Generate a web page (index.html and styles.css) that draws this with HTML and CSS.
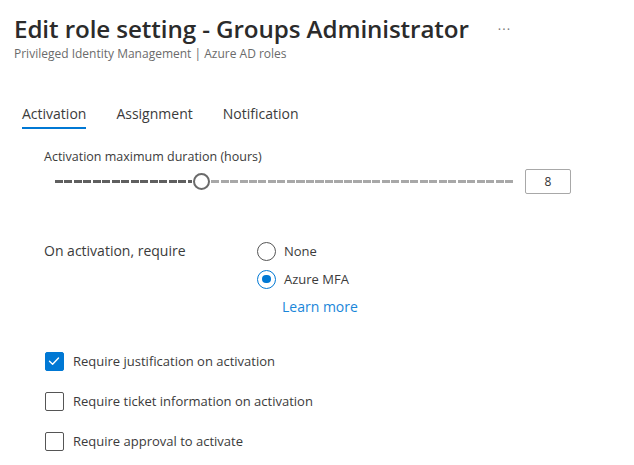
FILE: index.html
```html
<!DOCTYPE html>
<html>
<head>
<meta charset="utf-8">
<link rel="stylesheet" href="styles.css">
</head>
<body>
<div class="page">
  <header class="head">
    <div class="title-row">
      <h1 class="title">Edit role setting - Groups Administrator</h1>
      <span class="more">···</span>
    </div>
    <div class="subtitle">Privileged Identity Management | Azure AD roles</div>
  </header>

  <nav class="tabs">
    <span class="tab active">Activation</span>
    <span class="tab">Assignment</span>
    <span class="tab">Notification</span>
  </nav>

  <section class="duration">
    <div class="label">Activation maximum duration (hours)</div>
    <div class="slider-row">
      <div class="slider">
        <span class="track filled"></span>
        <span class="thumb"></span>
        <span class="track rest"></span>
      </div>
      <div class="num">8</div>
    </div>
  </section>

  <section class="require">
    <div class="req-label">On activation, require</div>
    <div class="options">
      <div class="radio"><span class="circle"></span><span>None</span></div>
      <div class="radio"><span class="circle on"></span><span>Azure MFA</span></div>
      <a class="link">Learn more</a>
    </div>
  </section>

  <section class="checks">
    <div class="check"><span class="box on"><svg viewBox="0 0 18 18" width="18" height="18"><path d="M4.5 9.3 L7.6 12.2 L13.5 6" fill="none" stroke="#fff" stroke-width="1.4" stroke-linecap="round" stroke-linejoin="round"/></svg></span><span>Require justification on activation</span></div>
    <div class="check"><span class="box"></span><span>Require ticket information on activation</span></div>
    <div class="check"><span class="box"></span><span>Require approval to activate</span></div>
  </section>
</div>
</body>
</html>
```

FILE: styles.css
```css
html, body {
  margin: 0;
  padding: 0;
  background: #fff;
}
body {
  font-family: "Open Sans", "Noto Sans", sans-serif;
  color: #323130;
}
.page {
  padding: 14px 0 0 14px;
  width: 620px;
}
.title-row {
  display: flex;
  align-items: center;
  gap: 29px;
}
.title {
  margin: 0;
  font-size: 24.2px;
  font-weight: 600;
  line-height: 30px;
  letter-spacing: -0.1px;
  color: #2b2b2b;
}
.more {
  font-size: 13px;
  color: #777;
  letter-spacing: 1px;
}
.subtitle {
  font-size: 12px;
  color: #6b6b6b;
  line-height: 16px;
  margin-top: 2px;
}
.tabs {
  display: flex;
  gap: 30px;
  margin: 42px 0 0 8px;
}
.tab {
  font-size: 14px;
  line-height: 20px;
  color: #3b3b3b;
  padding-bottom: 3px;
}
.tab.active {
  border-bottom: 2px solid #0078d4;
}
.duration {
  margin: 19px 0 0 30px;
}
.label {
  font-size: 12.5px;
  color: #3b3b3b;
  line-height: 18px;
}
.slider-row {
  display: flex;
  align-items: center;
  margin-top: 3px;
}
.slider {
  display: flex;
  align-items: center;
  margin-left: 11px;
}
.track {
  display: block;
}
.track.filled {
  width: 137px;
  height: 3px;
  background: repeating-linear-gradient(90deg, #5f5f5f 0 8px, transparent 8px 9.5px);
}
.track.rest {
  width: 303px;
  height: 3px;
  background: repeating-linear-gradient(90deg, #a8a8a8 0 8px, transparent 8px 9.5px);
}
.thumb {
  width: 13px;
  height: 13px;
  border: 2px solid #6a6a6a;
  border-radius: 50%;
  background: #fff;
  margin: 0 1px;
}
.num {
  margin-left: 11px;
  width: 44px;
  height: 23px;
  border: 1px solid #a8a8a8;
  border-radius: 2px;
  font-size: 12px;
  line-height: 23px;
  text-align: center;
  color: #333;
}
.require {
  display: flex;
  margin: 47px 0 0 30px;
}
.req-label {
  width: 213px;
  font-size: 14px;
  color: #3b3b3b;
  line-height: 20px;
}
.options {
  display: flex;
  flex-direction: column;
  gap: 8px;
}
.radio {
  display: flex;
  align-items: center;
  gap: 8px;
  font-size: 13px;
  color: #3b3b3b;
  line-height: 20px;
}
.circle {
  box-sizing: border-box;
  width: 19px;
  height: 19px;
  border: 1.3px solid #555;
  border-radius: 50%;
  background: #fff;
  position: relative;
}
.circle.on {
  border-color: #0078d4;
}
.circle.on::after {
  content: "";
  position: absolute;
  left: 4px;
  top: 4px;
  width: 8.5px;
  height: 8.5px;
  border-radius: 50%;
  background: #0078d4;
}
.link {
  margin-left: 25px;
  font-size: 14px;
  color: #1a86d9;
  line-height: 20px;
}
.checks {
  margin: 35px 0 0 31px;
  display: flex;
  flex-direction: column;
  gap: 21px;
}
.check {
  display: flex;
  align-items: center;
  gap: 9px;
  font-size: 13px;
  color: #3b3b3b;
  line-height: 19px;
}
.box {
  box-sizing: border-box;
  width: 19px;
  height: 19px;
  border: 1.3px solid #555;
  border-radius: 2px;
  display: flex;
}
.box.on {
  background: #0078d4;
  border-color: #0078d4;
}
.box svg {
  margin: -1.3px;
}
```
